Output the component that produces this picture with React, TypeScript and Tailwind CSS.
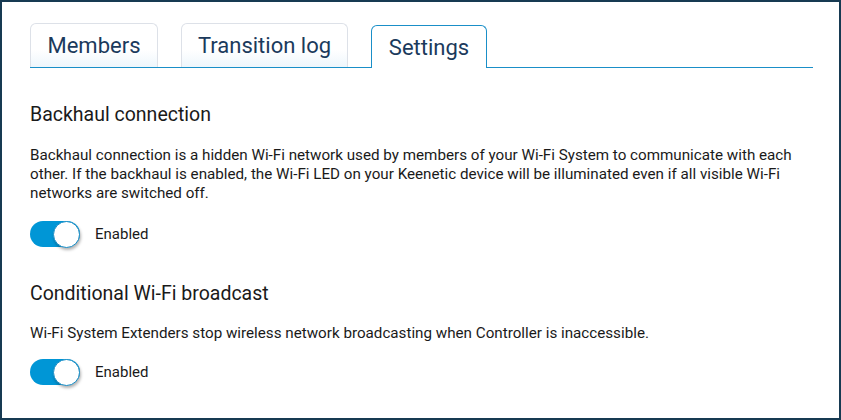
import React from "react";

function Toggle() {
  return (
    <div className="relative h-[26px] w-[50px] rounded-full bg-[#0096d6]">
      <div className="absolute right-0 top-[-0.5px] h-[27px] w-[27px] rounded-full border border-[#1a8fc8] bg-white shadow-[1px_2px_3px_rgba(0,0,0,0.3)]" />
    </div>
  );
}

function Section({
  title,
  text,
  className = "",
  pClass,
  tClass,
}: {
  title: string;
  text: string;
  className?: string;
  pClass: string;
  tClass: string;
}) {
  return (
    <div className={className}>
      <h2 className="text-[19.5px] leading-[24px] text-[#1a1a1a]">{title}</h2>
      <p className={`${pClass} text-[15.2px] leading-[19px] text-[#1a1a1a]`}>{text}</p>
      <div className={`${tClass} flex items-center gap-[15px]`}>
        <Toggle />
        <span className="text-[15px] text-[#1a1a1a]">Enabled</span>
      </div>
    </div>
  );
}

export default function App() {
  return (
    <div
      className="h-[420px] w-[841px] border-2 border-[#173a52] bg-white pl-[28px] pr-[26px] pt-[21px]"
      style={{ fontFamily: "Roboto, 'Liberation Sans', sans-serif" }}
    >
      <div className="flex items-end gap-[23px] border-b border-[#1a8fc8]">
        <div className="flex h-[44px] w-[128px] items-center justify-center rounded-t-[6px] border border-b-0 border-[#dde1e8] bg-gradient-to-b from-white from-60% to-[#eef6fc] text-[22px] text-[#1b3a5c]">
          Members
        </div>
        <div className="flex h-[44px] w-[167px] items-center justify-center rounded-t-[6px] border border-b-0 border-[#dde1e8] bg-gradient-to-b from-white from-60% to-[#eef6fc] text-[22px] text-[#1b3a5c]">
          Transition log
        </div>
        <div className="-mb-px flex h-[43px] w-[116px] items-center justify-center rounded-t-[6px] border border-b-0 border-[#1a8fc8] bg-white pt-[1px] text-[22px] text-[#1b3a5c]">
          Settings
        </div>
      </div>
      <Section
        className="mt-[35px]"
        pClass="mt-[19px]"
        tClass="mt-[18px]"
        title="Backhaul connection"
        text="Backhaul connection is a hidden Wi-Fi network used by members of your Wi-Fi System to communicate with each other. If the backhaul is enabled, the Wi-Fi LED on your Keenetic device will be illuminated even if all visible Wi-Fi networks are switched off."
      />
      <Section
        className="mt-[35px]"
        pClass="mt-[18px]"
        tClass="mt-[16px]"
        title="Conditional Wi-Fi broadcast"
        text="Wi-Fi System Extenders stop wireless network broadcasting when Controller is inaccessible."
      />
    </div>
  );
}
